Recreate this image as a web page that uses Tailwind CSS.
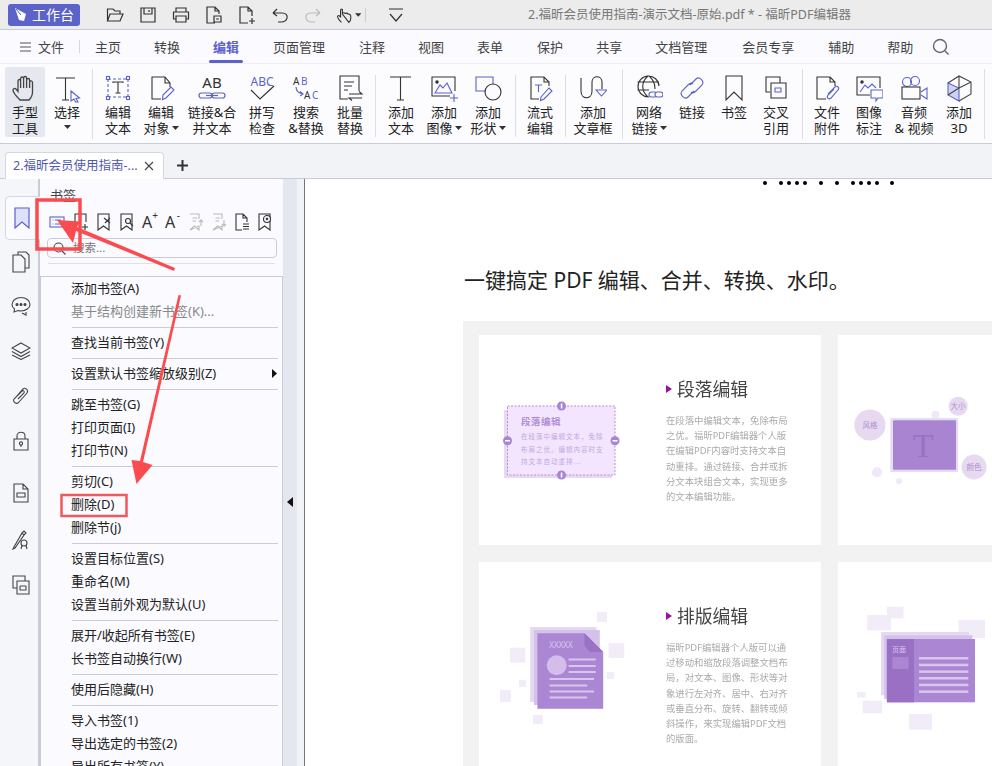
<!DOCTYPE html>
<html lang="zh-CN">
<head>
  <meta charset="UTF-8">
  <title>福昕PDF编辑器</title>
  <script src="https://cdn.jsdelivr.net/npm/@tailwindcss/browser@4"></script>
</head>
<body class="bg-white">
<div class="relative w-[992px] h-[766px] overflow-hidden flex flex-col text-[#222] font-['Noto_Sans','Noto_Sans_CJK_SC',sans-serif]">

  <!-- Title bar -->
  <header class="h-[30px] shrink-0 bg-[#ececec] border-b border-[#c9ccd8] flex items-center pl-[8px]">
    <div class="w-[72px] h-[22px] rounded-[3px] bg-[#5b62c9] text-white text-[14px] leading-[22px] flex items-center justify-center gap-[4px]">
      <svg width="14" height="16" viewBox="0 0 14 16"><path d="M1 1 L12 7 L10 14 L5 13 Z" fill="#fff"/><path d="M2 2 L7 8" stroke="#5b62c9"/></svg>
      <span>工作台</span>
    </div>
    <div class="ml-[25px] flex items-center gap-[13px]">
      <svg width="20" height="20" viewBox="0 0 20 20" fill="none" stroke="#333" stroke-width="1.2"><path d="M2.5 16 V4 H8 L10 6 H15 V9 M2.5 16 L5 9 H18 L15 16 Z"/></svg>
      <svg width="20" height="20" viewBox="0 0 20 20" fill="none" stroke="#333" stroke-width="1.2"><path d="M3 3 H17 V17 H3 Z M6 3 V9 H14 V3 M11 5 V7"/></svg>
      <svg width="20" height="20" viewBox="0 0 20 20" fill="none" stroke="#333" stroke-width="1.2"><path d="M5 7 V3 H15 V7 M5 14 H2.5 V7 H17.5 V14 H15 M5 11 H15 V17 H5 Z"/></svg>
      <svg width="20" height="20" viewBox="0 0 20 20" fill="none" stroke="#333" stroke-width="1.2"><path d="M11 18 H3 V2 H11 L15 6 V9 M11 2 V6 H15 M10 11 H17 V17 H10 Z M12 14 H15"/></svg>
      <svg width="20" height="20" viewBox="0 0 20 20" fill="none" stroke="#333" stroke-width="1.2"><path d="M11 18 H3 V2 H11 L15 6 V11 M11 2 V6 H15 M15 13 V19 M12 16 H18"/></svg>
      <svg width="20" height="20" viewBox="0 0 20 20" fill="none" stroke="#333" stroke-width="1.2"><path d="M3 8 H12 C20 8 18 17 11 17 H8 M3 8 L7 4 M3 8 L7 11"/></svg>
      <svg width="20" height="20" viewBox="0 0 20 20" fill="none" stroke="#bbb" stroke-width="1.2"><path d="M17 8 H8 C0 8 2 17 9 17 H12 M17 8 L13 4 M17 8 L13 11"/></svg>
      <div class="w-[26px] -ml-[1px] flex items-center gap-[1px]">
        <svg width="20" height="20" viewBox="0 0 20 20" fill="none" stroke="#333" stroke-width="1.2"><path d="M7 18 C4 15 2 12 3 11 C4 10 5 11 6 12 V5 C6 3 8 3 8 5 V3.5 M8 9 V5 M8 9 C8 7 11 7 11 9 C11 7.5 14 7.5 14 9.5 C14 8.5 17 9 17 11 V14 C17 16 16 17 15 18 Z"/></svg>
        <svg width="7" height="4" viewBox="0 0 7 4"><path d="M0 0 H7 L3.5 4 Z" fill="#333"/></svg>
      </div>
    </div>
    <div class="w-px h-[14px] bg-[#ccc] ml-[4px]"></div>
    <svg class="ml-[20px]" width="20" height="20" viewBox="0 0 20 20" fill="none" stroke="#333" stroke-width="1.2"><path d="M3 4 H17 M4 9 L10 16 L16 9"/></svg>
    <span class="ml-[122px] text-[12.5px] leading-[20px] text-[#777] whitespace-nowrap">2.福昕会员使用指南-演示文档-原始.pdf * - 福昕PDF编辑器</span>
  </header>

  <!-- Menu tabs -->
  <nav class="h-[34px] shrink-0 bg-[#fafaff] border-b border-[#eeeef4] flex items-center text-[13px] text-[#444] leading-[18px] whitespace-nowrap">
    <svg class="ml-[20px]" width="11" height="10" viewBox="0 0 11 10" fill="none" stroke="#555"><path d="M0 1 H11 M0 5 H11 M0 9 H11"/></svg>
    <span class="ml-[7px]">文件</span>
    <div class="ml-[15px] w-px h-[13px] bg-[#d5d7e0]"></div>
    <div class="ml-[15px] flex gap-[33px] h-full items-center">
      <span>主页</span>
      <span>转换</span>
      <span class="relative w-[26px] font-bold text-[#5b62c9]">编辑<span class="absolute left-[-4px] right-[-4px] top-[22px] h-[3px] bg-[#5b62c9] rounded-sm"></span></span>
      <span class="ml-[1px]">页面管理</span>
      <span class="ml-[1px]">注释</span>
      <span>视图</span>
      <span>表单</span>
      <span class="ml-[1px]">保护</span>
      <span>共享</span>
      <span>文档管理</span>
      <span class="ml-[2px]">会员专享</span>
      <span class="ml-[1px]">辅助</span>
      <span>帮助</span>
    </div>
    <svg class="ml-[19px]" width="18" height="18" viewBox="0 0 18 18" fill="none" stroke="#666" stroke-width="1.4"><circle cx="8" cy="8" r="6.5"/><path d="M13 13 L16.5 16.5"/></svg>
  </nav>

  <!-- Ribbon -->
  <section class="h-[80px] shrink-0 bg-[#fcfcff] border-b border-[#c9ccd8] flex pl-[5px] text-[13px] leading-[16px] text-center whitespace-nowrap">
    <div class="w-[40px] h-[70px] mt-[3px] pt-[5px] bg-[#e6e8f0] rounded-[2px] flex flex-col items-center">
      <svg class="h-[32px]" width="28" height="28" viewBox="0 0 28 28" fill="none" stroke="#444" stroke-width="1.3"><path d="M9 26 C6 23 2 18 2 16 C2 14.5 4 14 5 15 L7 17.5 V7 C7 5 9.6 5 9.6 7 V4.5 C9.6 2.5 12.6 2.5 12.6 4.5 V4 C12.6 2 15.6 2 15.6 4 V6 C15.6 4 18.6 4 18.6 6 V8 C18.6 6.5 21.5 6.5 21.5 8.5 V18 C21.5 21 20 24 18 26 Z M9.6 7 V14 M12.6 4.5 V14 M15.6 5 V14 M18.6 7 V14"/></svg>
      <span>手型<br>工具</span>
    </div>
    <div class="w-[44px] pt-[8px] flex flex-col items-center">
      <svg class="h-[32px]" width="28" height="28" viewBox="0 0 28 28" fill="none" stroke="#333" stroke-width="1.1"><path d="M3 4 H22 M12.5 4 V26 M9 26 H16"/><path d="M18 17 L26.5 24 L23 24.5 L25 28 L22.5 28 L21 25 L18 27 Z" stroke="#5b62c9"/></svg>
      <span>选择</span>
      <svg class="mt-[5px]" width="7" height="4" viewBox="0 0 7 4"><path d="M0 0 H7 L3.5 4 Z" fill="#333"/></svg>
    </div>
    <div class="w-[6px] flex justify-center pt-[5px]"><div class="w-px h-[70px] bg-[#dcdee6]"></div></div>
    <div class="w-[46px] pt-[8px] flex flex-col items-center">
      <svg class="h-[32px]" width="28" height="28" viewBox="0 0 28 28" fill="none" stroke="#5b62c9" stroke-width="1.1"><path d="M4 5 H24 M4 23 H24 M4 5 V23 M24 5 V23" stroke-dasharray="3 2"/><rect x="2.5" y="2.5" width="3" height="3" fill="#fcfcff"/><rect x="22.5" y="2.5" width="3" height="3" fill="#fcfcff"/><rect x="2.5" y="22.5" width="3" height="3" fill="#fcfcff"/><rect x="22.5" y="22.5" width="3" height="3" fill="#fcfcff"/><path d="M9 9 V8 H19 V9 M14 8 V19 M11.5 19 H16.5" stroke="#333"/></svg>
      <span>编辑<br>文本</span>
    </div>
    <div class="w-[40px] pt-[8px] flex flex-col items-center">
      <svg class="h-[32px]" width="28" height="28" viewBox="0 0 28 28" fill="none" stroke="#333" stroke-width="1.1"><path d="M14 25 H5 V3 H18 L23 9 V13 M18 3 V9 H23"/><path d="M16 21 L24 13 L27 16 L19 24 L15.5 25.5 Z" stroke="#5b62c9"/></svg>
      <span>编辑<br><span class="inline-flex items-center gap-[2px]">对象<svg width="7" height="4" viewBox="0 0 7 4"><path d="M0 0 H7 L3.5 4 Z" fill="#333"/></svg></span></span>
    </div>
    <div class="w-[62px] pt-[8px] flex flex-col items-center">
      <svg class="h-[32px]" width="28" height="28" viewBox="0 0 28 28" fill="none"><text x="14" y="14" text-anchor="middle" font-size="15" fill="#333" font-family="Noto Sans">AB</text><g stroke="#5b62c9" stroke-width="1.2"><rect x="1" y="19" width="13" height="5" rx="2.5"/><rect x="14" y="19" width="13" height="5" rx="2.5"/><path d="M8 21.5 H20"/></g></svg>
      <span>链接&amp;合<br>并文本</span>
    </div>
    <div class="w-[38px] pt-[8px] flex flex-col items-center">
      <svg class="h-[32px]" width="28" height="28" viewBox="0 0 28 28" fill="none"><text x="14" y="12" text-anchor="middle" font-size="12" fill="#5b62c9" font-family="Noto Sans">ABC</text><path d="M3 16 L12 25 L26 12" stroke="#333" stroke-width="1.2"/></svg>
      <span>拼写<br>检查</span>
    </div>
    <div class="w-[50px] pt-[8px] flex flex-col items-center">
      <svg class="h-[32px]" width="28" height="28" viewBox="0 0 28 28" fill="none"><text x="1" y="11" font-size="10" fill="#333" font-family="Noto Sans">A</text><text x="9" y="11" font-size="10" fill="#5b62c9" font-family="Noto Sans">B</text><text x="12" y="25" font-size="10" fill="#333" font-family="Noto Sans">A</text><text x="20" y="25" font-size="10" fill="#5b62c9" font-family="Noto Sans">C</text><path d="M4 13 C4 17 6 19 11 20 M8 17.5 L11 20 L8 22" stroke="#5b62c9" stroke-width="1.1"/></svg>
      <span>搜索<br>&amp;替换</span>
    </div>
    <div class="w-[38px] pt-[8px] flex flex-col items-center">
      <svg class="h-[32px]" width="28" height="28" viewBox="0 0 28 28" fill="none" stroke="#333" stroke-width="1.1"><path d="M12 25 H4 V2 H23 V17 M8 8 H18 M8 12 H16 M8 16 H12 M13 20 H26 L23 17.5 M26 24 H13 L16 26.5"/></svg>
      <span>批量<br>替换</span>
    </div>
    <div class="w-[12px] flex justify-center pt-[11px]"><div class="w-px h-[62px] bg-[#dcdee6]"></div></div>
    <div class="w-[40px] pt-[8px] flex flex-col items-center">
      <svg class="h-[32px]" width="28" height="28" viewBox="0 0 28 28" fill="none" stroke="#333" stroke-width="1.1"><path d="M3 3 H24 M13.5 3 V26 M10 26 H17"/></svg>
      <span>添加<br>文本</span>
    </div>
    <div class="w-[46px] pt-[8px] flex flex-col items-center">
      <svg class="h-[32px]" width="28" height="28" viewBox="0 0 28 28" fill="none" stroke="#333" stroke-width="1.1"><path d="M20 22 H2 V3 H25 V17"/><circle cx="7" cy="8" r="1.2" fill="#333"/><path d="M5 19 L10 11 L13 14 L17 9 L22 19 Z M20 24 H28 M24 20 V28" stroke="#5b62c9"/></svg>
      <span>添加<br><span class="inline-flex items-center gap-[2px]">图像<svg width="7" height="4" viewBox="0 0 7 4"><path d="M0 0 H7 L3.5 4 Z" fill="#333"/></svg></span></span>
    </div>
    <div class="w-[42px] pt-[8px] flex flex-col items-center">
      <svg class="h-[32px]" width="28" height="28" viewBox="0 0 28 28" fill="none" stroke-width="1.1"><path d="M12 17 H2 V3 H19 V10" stroke="#5b62c9"/><circle cx="19" cy="18" r="8" stroke="#333"/></svg>
      <span>添加<br><span class="inline-flex items-center gap-[2px]">形状<svg width="7" height="4" viewBox="0 0 7 4"><path d="M0 0 H7 L3.5 4 Z" fill="#333"/></svg></span></span>
    </div>
    <div class="w-[12px] flex justify-center pt-[11px]"><div class="w-px h-[62px] bg-[#dcdee6]"></div></div>
    <div class="w-[38px] pt-[8px] flex flex-col items-center">
      <svg class="h-[32px]" width="28" height="28" viewBox="0 0 28 28" fill="none" stroke="#333" stroke-width="1.1"><path d="M13 25 H5 V3 H18 L23 8 V12 M18 3 V8 H23"/><path d="M9 11 H16 M12.5 11 V18 M15 23 L23 14 L26 17 L18 25 L14.5 26.5 Z" stroke="#5b62c9"/></svg>
      <span>流式<br>编辑</span>
    </div>
    <div class="w-[12px] flex justify-center pt-[11px]"><div class="w-px h-[62px] bg-[#dcdee6]"></div></div>
    <div class="w-[44px] pt-[8px] flex flex-col items-center">
      <svg class="h-[32px]" width="28" height="28" viewBox="0 0 28 28" fill="none" stroke="#333" stroke-width="1.1"><path d="M2 4 V17 C2 26 13 26 13 17 V8 C13 1 23 1 23 8 V15"/><path d="M17 16 H28 L22.5 22 Z" stroke="#5b62c9"/></svg>
      <span>添加<br>文章框</span>
    </div>
    <div class="w-[14px] flex justify-center pt-[5px]"><div class="w-px h-[70px] bg-[#dcdee6]"></div></div>
    <div class="w-[40px] pt-[8px] flex flex-col items-center">
      <svg class="h-[32px]" width="28" height="28" viewBox="0 0 28 28" fill="none" stroke="#333" stroke-width="1.1"><path d="M14 23 A10.5 10.5 0 1 1 24 12 M2.5 8 H24 M2.5 16 H14 M13 2 C6 8 6 17 13 23 M14 2 C19 6 20 10 20 15"/><g stroke="#5b62c9"><rect x="14" y="18" width="8" height="5" rx="2.5" fill="#fcfcff"/><rect x="20" y="18" width="8" height="5" rx="2.5" fill="#fcfcff"/></g></svg>
      <span>网络<br><span class="inline-flex items-center gap-[2px]">链接<svg width="7" height="4" viewBox="0 0 7 4"><path d="M0 0 H7 L3.5 4 Z" fill="#333"/></svg></span></span>
    </div>
    <div class="w-[46px] pt-[8px] flex flex-col items-center">
      <svg class="h-[32px]" width="28" height="28" viewBox="0 0 28 28" fill="none" stroke="#5b62c9" stroke-width="1.1"><path d="M12 11 L18 5 C21 2 27 7 24 11 L18 17 C16 19 14 19 13 18 M16 17 L10 23 C7 26 1 21 4 17 L10 11 C12 9 14 9 15 10"/></svg>
      <span>链接</span>
    </div>
    <div class="w-[38px] pt-[8px] flex flex-col items-center">
      <svg class="h-[32px]" width="28" height="28" viewBox="0 0 28 28" fill="none" stroke="#333" stroke-width="1.1"><path d="M6 2 H22 V26 L14 18 L6 26 Z"/></svg>
      <span>书签</span>
    </div>
    <div class="w-[46px] pt-[8px] flex flex-col items-center">
      <svg class="h-[32px]" width="28" height="28" viewBox="0 0 28 28" fill="none" stroke="#333" stroke-width="1.1"><path d="M8 18 H4 V3 H18 V9 M9 9 H24 V24 H9 Z"/><path d="M13 14 H19 V18 H13 Z" stroke="#5b62c9"/></svg>
      <span>交叉<br>引用</span>
    </div>
    <div class="w-[6px] flex justify-center pt-[5px]"><div class="w-px h-[70px] bg-[#dcdee6]"></div></div>
    <div class="w-[44px] pt-[8px] flex flex-col items-center">
      <svg class="h-[32px]" width="28" height="28" viewBox="0 0 28 28" fill="none" stroke="#333" stroke-width="1.1"><path d="M13 25 H4 V3 H17 L22 8 V12 M17 3 V8 H22"/><path d="M15 20 L22 13 C24 11 27 14 25 16 L18 24 C16 26 13 24 15 21 L21 15" stroke="#5b62c9"/></svg>
      <span>文件<br>附件</span>
    </div>
    <div class="w-[40px] pt-[8px] flex flex-col items-center">
      <svg class="h-[32px]" width="28" height="28" viewBox="0 0 28 28" fill="none" stroke="#333" stroke-width="1.1"><path d="M15 21 H2 V3 H25 V14"/><circle cx="7" cy="8" r="1.2" fill="#333"/><path d="M5 18 L10 11 L13 14 L17 10 L21 14" stroke="#5b62c9"/><path d="M16 16 H28 V24 H23 L21 27 V24 H16 Z" stroke="#5b62c9" fill="#fcfcff"/></svg>
      <span>图像<br>标注</span>
    </div>
    <div class="w-[50px] pt-[8px] flex flex-col items-center">
      <svg class="h-[32px]" width="28" height="28" viewBox="0 0 28 28" fill="none" stroke="#333" stroke-width="1.1"><circle cx="7" cy="8" r="4.5" stroke="#5b62c9"/><circle cx="15" cy="7" r="4.5" stroke="#5b62c9"/><rect x="2" y="13" width="18" height="12"/><path d="M21 18 L27 14 V25 L21 21" stroke="#5b62c9"/></svg>
      <span>音频<br>&amp; 视频</span>
    </div>
    <div class="w-[40px] pt-[8px] flex flex-col items-center">
      <svg class="h-[32px]" width="28" height="28" viewBox="0 0 28 28" fill="none" stroke="#444" stroke-width="1.1"><path d="M3 9 L14 14 V27 L3 21 Z" fill="#cfd2f3" stroke="#5b62c9"/><path d="M3 9 L14 2 L26 8 V20 L14 27 M14 14 L26 8 M14 2 V14 M3 21 L14 14" /></svg>
      <span>添加<br>3D</span>
    </div>
    <div class="w-[10px] flex justify-center pt-[5px]"><div class="w-px h-[70px] bg-[#dcdee6]"></div></div>
  </section>

  <!-- Document tabs -->
  <div class="h-[35px] shrink-0 bg-[#f2f3f7] border-b border-[#c9ccd8] flex items-end pl-[5px] whitespace-nowrap">
    <div class="w-[159px] h-[27px] -mb-px bg-white border border-b-0 border-[#d5d7e0] rounded-t-[4px] flex items-center pl-[7px] text-[12.5px] text-[#5058b0]">
      <span class="w-[131px]">2.福昕会员使用指南-...</span>
      <svg width="10" height="10" viewBox="0 0 10 10" stroke="#444" stroke-width="1.1"><path d="M1 1 L9 9 M9 1 L1 9"/></svg>
    </div>
    <svg class="ml-[13px] mb-[7px]" width="11" height="11" viewBox="0 0 11 11" stroke="#333" stroke-width="2"><path d="M5.5 0 V11 M0 5.5 H11"/></svg>
  </div>

  <main class="flex-1 min-h-0 flex">
    <!-- Left rail -->
    <aside class="w-[40px] shrink-0 bg-[#f5f6fa] border-r-2 border-[#c9ccd8] pt-[17px] pl-[5px]">
      <div class="w-[35px] h-[44px] bg-[#fafaff] border border-r-0 border-[#d5d7e0] rounded-l-[5px] flex items-center justify-center pr-[3px]">
        <svg width="16" height="22" viewBox="0 0 16 22" fill="#dfe1fa" stroke="#5b62c9" stroke-width="1.2"><path d="M1 1 H15 V21 L8 15 L1 21 Z"/></svg>
      </div>
      <div class="w-[32px] h-[44px] flex items-center justify-center">
        <svg width="18" height="22" viewBox="0 0 18 22" fill="none" stroke="#444" stroke-width="1.1"><path d="M6 4 V1 H14 L17 4 V17 H13 M1 4 H9 L13 8 V21 H1 Z"/></svg>
      </div>
      <div class="w-[32px] h-[44px] flex items-center justify-center">
        <svg width="20" height="20" viewBox="0 0 20 20" fill="none" stroke="#444" stroke-width="1.1"><path d="M10 1.5 C5 1.5 1 4.5 1 8.5 C1 10.5 2 12 3.5 13 L3 16 L7 14.5 C8 14.8 9 15 10 15 C15 15 19 12 19 8.5 C19 4.5 15 1.5 10 1.5 Z M11 17 L15 19 V16"/><circle cx="6" cy="8.5" r="1" fill="#444"/><circle cx="10" cy="8.5" r="1" fill="#444"/><circle cx="14" cy="8.5" r="1" fill="#444"/></svg>
      </div>
      <div class="w-[32px] h-[45px] flex items-center justify-center">
        <svg width="20" height="18" viewBox="0 0 20 18" fill="none" stroke="#444" stroke-width="1.1"><path d="M10 1 L19 6 L10 11 L1 6 Z M1 9.5 L10 14.5 L19 9.5 M1 13 L10 17.5 L19 13"/></svg>
      </div>
      <div class="w-[32px] h-[46px] flex items-center justify-center">
        <svg width="18" height="20" viewBox="0 0 18 20" fill="none" stroke="#444" stroke-width="1.1"><path d="M4 11 L11 3 C13 1 17 4 15 7 L7 16 C5 19 0 16 2 13 L10 5 C11 4 13 5 12 7 L6 13"/></svg>
      </div>
      <div class="w-[32px] h-[44px] flex items-center justify-center">
        <svg width="16" height="20" viewBox="0 0 16 20" fill="none" stroke="#444" stroke-width="1.1"><path d="M1 8 H15 V19 H1 Z M4 8 V5 C4 0 12 0 12 5 V8"/><circle cx="8" cy="12.5" r="1.6"/><path d="M8 14 V16"/></svg>
      </div>
      <div class="w-[32px] h-[60px] flex items-center justify-center">
        <svg width="16" height="20" viewBox="0 0 16 20" fill="none" stroke="#444" stroke-width="1.1"><path d="M1 1 H10 L15 6 V19 H1 Z M10 1 V6 H15 M4 10 H12 V14 H4 Z"/></svg>
      </div>
      <div class="w-[32px] h-[34px] flex items-center justify-center">
        <svg width="18" height="20" viewBox="0 0 18 20" fill="none" stroke="#444" stroke-width="1.1"><path d="M2 17 L1 19 L3 18 L12 5 L10 3 Z M10 3 L12 1 L14 3 L12 5"/><circle cx="12" cy="13" r="3"/><path d="M10 15.5 L9 19 M14 15.5 L15 19"/></svg>
      </div>
      <div class="w-[32px] h-[56px] flex items-center justify-center">
        <svg width="18" height="20" viewBox="0 0 18 20" fill="none" stroke="#444" stroke-width="1.1"><path d="M5 13 H1 V1 H13 V6 M5 6 H17 V19 H5 Z M8 11 H14 M8 11 V15 H14 V11"/></svg>
      </div>
    </aside>

    <!-- Bookmark panel -->
    <div class="w-[243px] shrink-0 bg-[#fafaff] flex flex-col">
      <div class="pl-[10px] pt-[8px] text-[13px] leading-[16px] text-[#444]">书签</div>
      <div class="mt-[10px] pl-[9px] flex gap-[7px]">
        <svg width="16" height="18" viewBox="0 0 16 18" fill="none" stroke="#5b62c9" stroke-width="1.1"><rect x="1" y="4" width="14" height="10"/><path d="M3.5 7 H4.5 M6 7 H12 M3.5 11 H4.5 M6 11 H12"/></svg>
        <svg class="ml-[1px]" width="16" height="18" viewBox="0 0 16 18" fill="none" stroke="#333" stroke-width="1.1"><path d="M9 17 H2 V1 H13 V9 M12 11 V17 M9 14 H15"/></svg>
        <svg width="16" height="18" viewBox="0 0 16 18" fill="none" stroke="#333" stroke-width="1.1"><path d="M2 1 H13 V17 L7.5 13 L2 17 Z M8 5 L14 10 M14 5 L9 10"/></svg>
        <svg width="16" height="18" viewBox="0 0 16 18" fill="none" stroke="#333" stroke-width="1.1"><path d="M2 1 H13 V17 L7.5 13 L2 17 Z"/><circle cx="9" cy="8" r="2.5" fill="#fafaff"/><path d="M11 10 L14 13"/></svg>
        <span class="relative w-[16px] h-[18px] text-[16px] leading-[18px] text-left text-[#333]">A<span class="absolute right-[0px] top-[-3px] text-[10px] leading-[10px]">+</span></span>
        <span class="relative w-[16px] h-[18px] text-[16px] leading-[18px] text-left text-[#333]">A<span class="absolute right-[1px] top-[-3px] text-[10px] leading-[10px]">-</span></span>
        <svg width="16" height="18" viewBox="0 0 16 18" fill="none" stroke="#bbb" stroke-width="1.1"><path d="M2 1 H11 V6 M11 13 V17 L6.5 13 L2 17 Z M4.5 5 H9 M4.5 8 H8 M13 13 V7 L11 9 M13 7 L15 9"/></svg>
        <svg width="16" height="18" viewBox="0 0 16 18" fill="none" stroke="#bbb" stroke-width="1.1"><path d="M2 1 H11 V6 M11 13 V17 L6.5 13 L2 17 Z M4.5 5 H9 M4.5 8 H8 M13 7 V13 L11 11 M13 13 L15 11"/></svg>
        <svg width="16" height="18" viewBox="0 0 16 18" fill="none" stroke="#333" stroke-width="1.1"><path d="M8 17 H2 V1 H9 L13 5 V9 M9 1 V5 H13 M9 11 H15 M9 13.5 H15 M9 16 H15"/></svg>
        <svg width="16" height="18" viewBox="0 0 16 18" fill="none" stroke="#333" stroke-width="1.1"><path d="M2 1 H13 V17 L7.5 13 L2 17 Z"/><circle cx="10" cy="6" r="3.5" fill="#fafaff"/><path d="M9 5 L11 7 M11 5 L9 7"/></svg>
      </div>
      <div class="mt-[7px] ml-[7px] w-[230px] h-[20px] border border-[#c9ccd8] rounded-[4px] flex items-center pl-[5px] gap-[7px] text-[11.5px] text-[#777]">
        <svg width="13" height="13" viewBox="0 0 13 13" fill="none" stroke="#444" stroke-width="1.1"><circle cx="5.5" cy="5.5" r="4.5"/><path d="M9 9 L12.5 12.5"/></svg>
        <span>搜索...</span>
      </div>
      <div class="mt-[5px] mx-[8px] h-px bg-[#dfe1e8]"></div>

      <!-- Context menu -->
      <div class="mt-[12px] flex-1 min-h-0 overflow-hidden border-t border-l border-r border-[#c9ccd8] text-[13px] leading-[23px] whitespace-nowrap">
        <div class="pl-[30px]">添加书签(A)</div>
        <div class="pl-[30px] text-[#888]">基于结构创建新书签(K)...</div>
        <div class="ml-[31px] mr-[4px] mt-[4px] mb-[3px] h-px bg-[#c9ccd8]"></div>
        <div class="pl-[30px]">查找当前书签(Y)</div>
        <div class="ml-[31px] mr-[4px] mt-[4px] mb-[3px] h-px bg-[#c9ccd8]"></div>
        <div class="pl-[30px] pr-[5px] flex items-center justify-between">设置默认书签缩放级别(Z)<svg width="5" height="9" viewBox="0 0 5 9"><path d="M0 0 L5 4.5 L0 9 Z" fill="#111"/></svg></div>
        <div class="ml-[31px] mr-[4px] mt-[4px] mb-[3px] h-px bg-[#c9ccd8]"></div>
        <div class="pl-[30px]">跳至书签(G)</div>
        <div class="pl-[30px]">打印页面(I)</div>
        <div class="pl-[30px]">打印节(N)</div>
        <div class="ml-[31px] mr-[4px] mt-[4px] mb-[3px] h-px bg-[#c9ccd8]"></div>
        <div class="pl-[30px]">剪切(C)</div>
        <div class="pl-[30px]">删除(D)</div>
        <div class="pl-[30px]">删除节(j)</div>
        <div class="ml-[31px] mr-[4px] mt-[4px] mb-[3px] h-px bg-[#c9ccd8]"></div>
        <div class="pl-[30px]">设置目标位置(S)</div>
        <div class="pl-[30px]">重命名(M)</div>
        <div class="pl-[30px]">设置当前外观为默认(U)</div>
        <div class="ml-[31px] mr-[4px] mt-[4px] mb-[3px] h-px bg-[#c9ccd8]"></div>
        <div class="pl-[30px]">展开/收起所有书签(E)</div>
        <div class="pl-[30px]">长书签自动换行(W)</div>
        <div class="ml-[31px] mr-[4px] mt-[4px] mb-[3px] h-px bg-[#c9ccd8]"></div>
        <div class="pl-[30px]">使用后隐藏(H)</div>
        <div class="ml-[31px] mr-[4px] mt-[4px] mb-[3px] h-px bg-[#c9ccd8]"></div>
        <div class="pl-[30px]">导入书签(1)</div>
        <div class="pl-[30px]">导出选定的书签(2)</div>
        <div class="pl-[30px]">导出所有书签(Y)</div>
      </div>
    </div>

    <!-- Collapse strip -->
    <div class="w-[14px] shrink-0 bg-[#e4e7f0] flex items-center justify-center pt-[58px]">
      <svg width="6" height="10" viewBox="0 0 6 10"><path d="M6 0 L0 5 L6 10 Z" fill="#111"/></svg>
    </div>
    <div class="w-[8px] shrink-0 bg-[#f2f3f7] border-r border-[#777]"></div>

    <!-- PDF page -->
    <div class="flex-1 min-w-0 bg-white overflow-hidden">
      <div class="h-[142px] pt-[2px] pl-[458px] flex flex-col">
        <div class="flex gap-[4px]">
          <i class="w-[4px] h-[4px] rounded-full bg-black"></i>
          <i class="ml-[8px] w-[4px] h-[4px] rounded-full bg-black"></i>
          <i class="w-[4px] h-[4px] rounded-full bg-black"></i>
          <i class="w-[4px] h-[4px] rounded-full bg-black"></i>
          <i class="w-[4px] h-[4px] rounded-full bg-black"></i>
          <i class="ml-[8px] w-[4px] h-[4px] rounded-full bg-black"></i>
          <i class="ml-[8px] w-[4px] h-[4px] rounded-full bg-black"></i>
          <i class="ml-[8px] w-[4px] h-[4px] rounded-full bg-black"></i>
          <i class="w-[4px] h-[4px] rounded-full bg-black"></i>
          <i class="w-[4px] h-[4px] rounded-full bg-black"></i>
          <i class="w-[4px] h-[4px] rounded-full bg-black"></i>
          <i class="ml-[7px] w-[4px] h-[4px] rounded-full bg-black"></i>
        </div>
        <h1 class="-ml-[299px] mt-[80px] text-[21px] leading-[30px] font-normal whitespace-nowrap">一键搞定 PDF 编辑、合并、转换、水印。</h1>
      </div>
      <div class="ml-[158px] h-[445px] bg-[#f2f2f2] pl-[16px] pt-[14px] grid grid-cols-[342px_342px] grid-rows-[210px_210px] gap-[17px]">

        <!-- Card: paragraph -->
        <article class="bg-white flex">
          <svg class="shrink-0" width="187" height="210" viewBox="0 0 187 210">
            <rect x="25" y="75" width="108" height="68" fill="#e6d8f6"/>
            <rect x="28.5" y="71" width="107.5" height="69" fill="#f3e5fd" stroke="#b48ddb" stroke-dasharray="2 1.5"/>
            <g fill="#a985d1"><circle cx="82.5" cy="71" r="4.5"/><circle cx="82.5" cy="140" r="4.5"/><circle cx="28.5" cy="105.7" r="4.5"/><circle cx="136" cy="105.7" r="4.5"/></g>
            <g fill="#fff"><rect x="81.8" y="68.5" width="1.5" height="5"/><rect x="81.8" y="137.5" width="1.5" height="5"/><rect x="26" y="105" width="5" height="1.5"/><rect x="133.5" y="105" width="5" height="1.5"/></g>
            <text x="42" y="90" font-size="9.5" font-weight="700" letter-spacing="0.5" fill="#b08fd6">段落编辑</text>
            <g font-size="6.5" letter-spacing="1" fill="#c4a7e3"><text x="42" y="104">在段落中编辑文本，免除</text><text x="42" y="117">布局之优。编辑内容时支</text><text x="42" y="129">持文本自动重排...</text></g>
          </svg>
          <div class="pt-[43px] blur-[0.3px]">
            <h2 class="flex items-center gap-[5px] text-[17.8px] leading-[22px] text-[#444] font-normal"><svg width="6" height="8" viewBox="0 0 6 8"><path d="M0 0 L6 4 L0 8 Z" fill="#9a0f9e"/></svg>段落编辑</h2>
            <p class="mt-[13px] text-[9.35px] leading-[15.2px] text-[#aaa] whitespace-nowrap">在段落中编辑文本，免除布局<br>之优。福昕PDF编辑器个人版<br>在编辑PDF内容时支持文本自<br>动重排。通过链接、合并或拆<br>分文本块组合文本，实现更多<br>的文本编辑功能。</p>
          </div>
        </article>

        <!-- Card: font -->
        <article class="bg-white">
          <svg width="154" height="210" viewBox="0 0 154 210">
            <g fill="#e6d9f0"><circle cx="31.9" cy="90" r="15.6"/><circle cx="120.1" cy="71.3" r="9.5"/><circle cx="136" cy="132" r="12.5"/></g>
            <g fill="#f0e8f6"><circle cx="97.4" cy="79.7" r="4"/><circle cx="39" cy="137.3" r="5"/><circle cx="61.1" cy="146" r="3"/></g>
            <rect x="52.3" y="83" width="67.8" height="54" rx="1.5" fill="#e6dcf2"/>
            <rect x="55" y="85.3" width="63" height="49.4" rx="1" fill="#a985d1"/>
            <text x="85.2" y="122" text-anchor="middle" font-size="34" fill="#9a72c5" font-family="Liberation Serif">T</text>
            <g font-size="7.5" text-anchor="middle" fill="#b18fd0"><text x="31.9" y="93">风格</text><text x="120.1" y="74">大小</text><text x="136" y="135">颜色</text></g>
          </svg>
        </article>

        <!-- Card: layout -->
        <article class="bg-white flex">
          <svg class="shrink-0" width="187" height="210" viewBox="0 0 187 210">
            <g fill="#f2ecf8"><rect x="30.9" y="85.7" width="15.3" height="15"/><rect x="118" y="50" width="10" height="10"/><rect x="129.6" y="81" width="15.6" height="15"/><rect x="127.6" y="110" width="7.4" height="7"/><rect x="40" y="118" width="7.2" height="7"/><rect x="21" y="128" width="10.9" height="12"/><rect x="54" y="153" width="9.8" height="9"/></g>
            <rect x="51.2" y="65" width="66.2" height="75" fill="#e5d9f1"/>
            <rect x="55" y="68" width="65.8" height="75" fill="#d5c2ea"/>
            <path d="M58.4 71.3 H105.5 L124.2 90 V146.7 H58.4 Z" fill="#aa86d3"/>
            <path d="M105.5 71.3 L124.2 90 H111 L105.5 84 Z" fill="#9a72c5"/>
            <text x="82" y="86" text-anchor="middle" font-size="8" fill="#d9c6ee">XXXXX</text>
            <circle cx="77.7" cy="103.3" r="10" fill="#d4bdea"/>
            <g fill="#d9c6ee"><rect x="89.6" y="96.5" width="27.1" height="2"/><rect x="89.6" y="103" width="27.1" height="2"/><rect x="89.6" y="109" width="27.1" height="2"/><rect x="70.6" y="116" width="44.4" height="2"/><rect x="70.6" y="122.5" width="37.6" height="2"/><rect x="70.6" y="128.5" width="44.4" height="2"/><rect x="70.6" y="134.5" width="37.6" height="2"/></g>
          </svg>
          <div class="pt-[43px] blur-[0.3px]">
            <h2 class="flex items-center gap-[5px] text-[17.8px] leading-[22px] text-[#444] font-normal"><svg width="6" height="8" viewBox="0 0 6 8"><path d="M0 0 L6 4 L0 8 Z" fill="#9a0f9e"/></svg>排版编辑</h2>
            <p class="mt-[13px] text-[9.35px] leading-[15.2px] text-[#aaa] whitespace-nowrap">福昕PDF编辑器个人版可以通<br>过移动和缩放段落调整文档布<br>局，对文本、图像、形状等对<br>象进行左对齐、居中、右对齐<br>或垂直分布、旋转、翻转或倾<br>斜操作，来实现编辑PDF文档<br>的版面。</p>
          </div>
        </article>

        <!-- Card: page -->
        <article class="bg-white">
          <svg width="154" height="210" viewBox="0 0 154 210">
            <g fill="#f2ecf8"><rect x="29.2" y="53" width="23.8" height="15.3"/><rect x="48.9" y="44.7" width="16.6" height="11.6"/><rect x="120.5" y="58" width="26.5" height="18"/><rect x="19" y="130" width="8.5" height="5.3"/><rect x="24.8" y="138.7" width="19.3" height="12.6"/><rect x="71" y="152" width="23" height="15.7"/></g>
            <rect x="43.1" y="70" width="87.9" height="63.3" fill="#e5d9f1"/>
            <rect x="46.2" y="73.3" width="88.2" height="63.7" fill="#d5c2ea"/>
            <rect x="48.9" y="77" width="88.1" height="63.3" fill="#aa86d3"/>
            <rect x="48.9" y="77" width="27.1" height="63.3" fill="#9a70c4"/>
            <text x="61.1" y="90" text-anchor="middle" font-size="7" fill="#d9c6ee">页面</text>
            <rect x="54.3" y="95" width="16.3" height="12" fill="#aa86d3"/>
            <g fill="#d9c6ee"><rect x="81" y="95" width="49.3" height="2.5"/><rect x="81" y="101.7" width="49.3" height="2.5"/><rect x="81" y="108.4" width="49.3" height="2.5"/><rect x="81" y="115" width="49.3" height="2.5"/><rect x="81" y="121.7" width="49.3" height="2.5"/><rect x="81" y="128.4" width="49.3" height="2.5"/></g>
          </svg>
        </article>
      </div>
    </div>
  </main>

  <!-- Red annotations drawn over the screenshot -->
  <svg class="absolute inset-0 pointer-events-none" width="992" height="766" viewBox="0 0 992 766" fill="none">
    <rect x="37" y="200" width="43" height="49" stroke="#fa4b4e" stroke-width="3.5"/>
    <path d="M175 268 L174 271 L76 231 L73 243 L57 220 L80 221.5 L77 227 Z" fill="#fa4b4e"/>
    <path d="M178.5 295 L181 295.5 L143 462 L152.5 465 L136.5 484 L131.5 460 L140 461 Z" fill="#fa4b4e"/>
    <rect x="61.5" y="495" width="65" height="21" stroke="#f0595c" stroke-width="2.5"/>
  </svg>
</div>
</body>
</html>
